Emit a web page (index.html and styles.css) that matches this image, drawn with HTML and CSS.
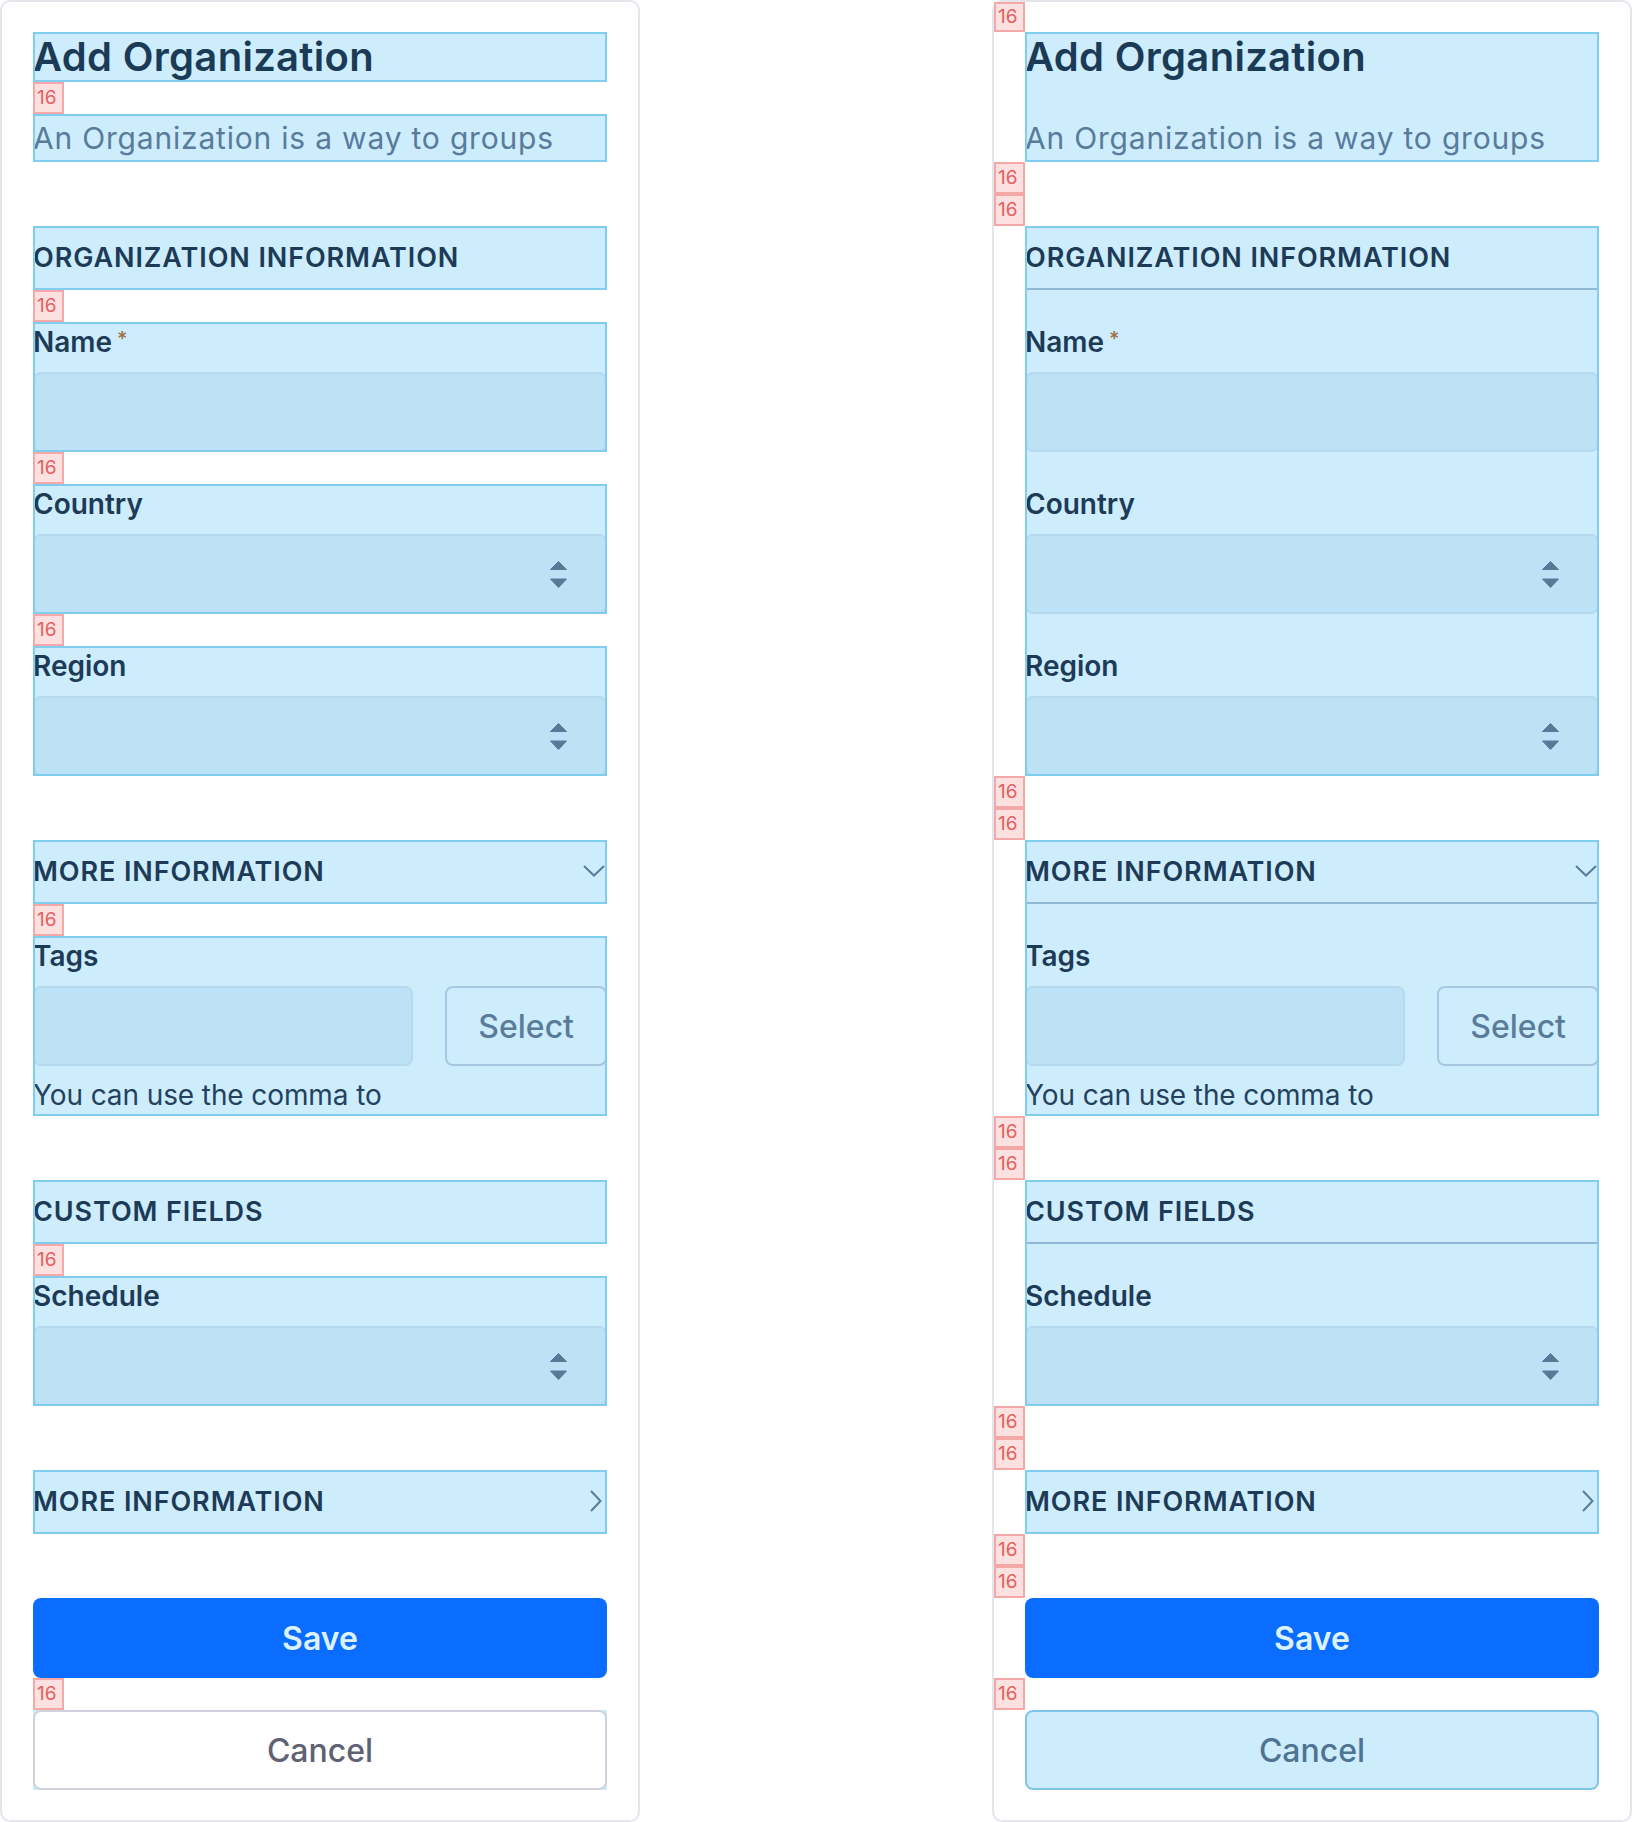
FILE: index.html
```html
<!DOCTYPE html>
<html lang="en">
<head>
<meta charset="utf-8">
<title>Add Organization</title>
<link rel="stylesheet" href="styles.css">
</head>
<body>
<div class="page">

  <!-- Left: element-level spacing -->
  <section class="card card-a">
    <div class="hl title-box"><h1 class="title">Add Organization</h1></div>
    <div class="sp"><span class="badge">16</span></div>
    <p class="hl desc">An Organization is a way to groups</p>
    <div class="sp2"></div>
    <div class="hl sec-head"><span>ORGANIZATION INFORMATION</span></div>
    <div class="sp"><span class="badge">16</span></div>
    <div class="hl field">
      <div class="label">Name<span class="req">*</span></div>
      <div class="input"></div>
    </div>
    <div class="sp"><span class="badge">16</span></div>
    <div class="hl field">
      <div class="label">Country</div>
      <div class="input select"><svg class="updown" width="17" height="27" viewBox="0 0 17 27"><path d="M8.5 0.5 L16.5 8.5 L0.5 8.5 Z M0.5 18 L16.5 18 L8.5 26.5 Z" fill="#587a99" stroke="#587a99" stroke-width="1" stroke-linejoin="round"/></svg></div>
    </div>
    <div class="sp"><span class="badge">16</span></div>
    <div class="hl field">
      <div class="label">Region</div>
      <div class="input select"><svg class="updown" width="17" height="27" viewBox="0 0 17 27"><path d="M8.5 0.5 L16.5 8.5 L0.5 8.5 Z M0.5 18 L16.5 18 L8.5 26.5 Z" fill="#587a99" stroke="#587a99" stroke-width="1" stroke-linejoin="round"/></svg></div>
    </div>
    <div class="sp2"></div>
    <div class="hl sec-head"><span>MORE INFORMATION</span><svg class="chev-down" width="22" height="12" viewBox="0 0 22 12"><path d="M1 1 L11 10.5 L21 1" fill="none" stroke="#5a7b9a" stroke-width="2"/></svg></div>
    <div class="sp"><span class="badge">16</span></div>
    <div class="hl field tags">
      <div class="label">Tags</div>
      <div class="tag-row"><div class="input"></div><div class="btn-select">Select</div></div>
      <div class="hint">You can use the comma to</div>
    </div>
    <div class="sp2"></div>
    <div class="hl sec-head"><span>CUSTOM FIELDS</span></div>
    <div class="sp"><span class="badge">16</span></div>
    <div class="hl field">
      <div class="label">Schedule</div>
      <div class="input select"><svg class="updown" width="17" height="27" viewBox="0 0 17 27"><path d="M8.5 0.5 L16.5 8.5 L0.5 8.5 Z M0.5 18 L16.5 18 L8.5 26.5 Z" fill="#587a99" stroke="#587a99" stroke-width="1" stroke-linejoin="round"/></svg></div>
    </div>
    <div class="sp2"></div>
    <div class="hl sec-head collapsed"><span>MORE INFORMATION</span><svg class="chev-right" width="12" height="22" viewBox="0 0 12 22"><path d="M1 1 L10.5 11 L1 21" fill="none" stroke="#5a7b9a" stroke-width="2"/></svg></div>
    <div class="sp2"></div>
    <div class="btn-save">Save</div>
    <div class="sp"><span class="badge">16</span></div>
    <div class="cancel-wrap"><div class="btn-cancel">Cancel</div></div>
  </section>

  <!-- Right: group-level spacing -->
  <section class="card card-b">
    <div class="lane lane-top"><span class="badge">16</span></div>
    <div class="lane"><span></span>
      <div class="hl group">
        <h1 class="title">Add Organization</h1>
        <div class="gap"></div>
        <p class="desc">An Organization is a way to groups</p>
      </div>
    </div>
    <div class="lane sp"><span class="badge">16</span></div>
    <div class="lane sp"><span class="badge">16</span></div>
    <div class="lane"><span></span>
      <div class="hl group">
        <div class="sec-head"><span>ORGANIZATION INFORMATION</span></div>
        <div class="gap"></div>
        <div class="field">
          <div class="label">Name<span class="req">*</span></div>
          <div class="input"></div>
        </div>
        <div class="gap"></div>
        <div class="field">
          <div class="label">Country</div>
          <div class="input select"><svg class="updown" width="17" height="27" viewBox="0 0 17 27"><path d="M8.5 0.5 L16.5 8.5 L0.5 8.5 Z M0.5 18 L16.5 18 L8.5 26.5 Z" fill="#587a99" stroke="#587a99" stroke-width="1" stroke-linejoin="round"/></svg></div>
        </div>
        <div class="gap"></div>
        <div class="field">
          <div class="label">Region</div>
          <div class="input select"><svg class="updown" width="17" height="27" viewBox="0 0 17 27"><path d="M8.5 0.5 L16.5 8.5 L0.5 8.5 Z M0.5 18 L16.5 18 L8.5 26.5 Z" fill="#587a99" stroke="#587a99" stroke-width="1" stroke-linejoin="round"/></svg></div>
        </div>
      </div>
    </div>
    <div class="lane sp"><span class="badge">16</span></div>
    <div class="lane sp"><span class="badge">16</span></div>
    <div class="lane"><span></span>
      <div class="hl group">
        <div class="sec-head"><span>MORE INFORMATION</span><svg class="chev-down" width="22" height="12" viewBox="0 0 22 12"><path d="M1 1 L11 10.5 L21 1" fill="none" stroke="#5a7b9a" stroke-width="2"/></svg></div>
        <div class="gap"></div>
        <div class="field tags">
          <div class="label">Tags</div>
          <div class="tag-row"><div class="input"></div><div class="btn-select">Select</div></div>
          <div class="hint">You can use the comma to</div>
        </div>
      </div>
    </div>
    <div class="lane sp"><span class="badge">16</span></div>
    <div class="lane sp"><span class="badge">16</span></div>
    <div class="lane"><span></span>
      <div class="hl group">
        <div class="sec-head"><span>CUSTOM FIELDS</span></div>
        <div class="gap"></div>
        <div class="field">
          <div class="label">Schedule</div>
          <div class="input select"><svg class="updown" width="17" height="27" viewBox="0 0 17 27"><path d="M8.5 0.5 L16.5 8.5 L0.5 8.5 Z M0.5 18 L16.5 18 L8.5 26.5 Z" fill="#587a99" stroke="#587a99" stroke-width="1" stroke-linejoin="round"/></svg></div>
        </div>
      </div>
    </div>
    <div class="lane sp"><span class="badge">16</span></div>
    <div class="lane sp"><span class="badge">16</span></div>
    <div class="lane"><span></span>
      <div class="hl sec-head collapsed"><span>MORE INFORMATION</span><svg class="chev-right" width="12" height="22" viewBox="0 0 12 22"><path d="M1 1 L10.5 11 L1 21" fill="none" stroke="#5a7b9a" stroke-width="2"/></svg></div>
    </div>
    <div class="lane sp"><span class="badge">16</span></div>
    <div class="lane sp"><span class="badge">16</span></div>
    <div class="lane"><span></span><div class="btn-save">Save</div></div>
    <div class="lane sp"><span class="badge">16</span></div>
    <div class="lane"><span></span><div class="btn-cancel tinted">Cancel</div></div>
  </section>

</div>
</body>
</html>
```

FILE: styles.css
```css
* {
  box-sizing: border-box;
  margin: 0;
  padding: 0;
}

html, body {
  background: #ffffff;
}

body {
  font-family: Inter, "Noto Sans", sans-serif;
  color: #1d3a56;
}

.page {
  display: flex;
  justify-content: space-between;
  width: 1632px;
  height: 1822px;
}

.card {
  width: 640px;
  height: 1822px;
  background: #ffffff;
  border: 2px solid #e4e6ec;
  border-radius: 10px;
  display: flex;
  flex-direction: column;
}

.card-a {
  padding: 30px 31px;
}

.card-b {
  padding: 0 31px 30px 0;
}

/* highlight overlay (spec boxes) */
.hl {
  background: #cdedfd;
  outline: 2px solid #80cdf0;
  outline-offset: -2px;
}

/* spacing markers */
.sp {
  height: 32px;
  display: flex;
}

.sp2 {
  height: 64px;
}

.gap {
  height: 32px;
}

.badge {
  width: 31px;
  height: 32px;
  background: #fde1e1;
  border: 2px solid #f4a8a8;
  color: #e2605f;
  font-size: 19px;
  line-height: 28px;
  padding-left: 2px;
  font-family: Inter, sans-serif;
}

/* right card lanes */
.lane {
  display: grid;
  grid-template-columns: 31px 574px;
}

.lane.sp {
  height: 32px;
}

.lane-top {
  height: 30px;
}

.lane-top .badge {
  height: 30px;
  line-height: 26px;
}

/* typography */
.title {
  font-size: 40px;
  line-height: 50px;
  font-weight: 600;
  color: #1b3a56;
  letter-spacing: 0.3px;
}

.desc {
  font-size: 30px;
  line-height: 48px;
  font-weight: 400;
  color: #597b9b;
  letter-spacing: 0.8px;
}

.sec-head {
  height: 64px;
  border-bottom: 2px solid #8fb8d6;
  display: flex;
  align-items: center;
  justify-content: space-between;
  font-size: 27px;
  font-weight: 600;
  letter-spacing: 0.9px;
  color: #1d3b57;
}

.chev-down {
  margin-right: 2px;
}

.chev-right {
  margin-right: 5px;
}

.field {
  display: flex;
  flex-direction: column;
}

.label {
  font-size: 28px;
  line-height: 40px;
  font-weight: 600;
  color: #1d3b57;
  margin-bottom: 10px;
}

.req {
  font-size: 20px;
  vertical-align: top;
  line-height: 34px;
  margin-left: 5px;
  color: #9c7044;
  font-weight: 500;
}

.input {
  height: 80px;
  background: #bee2f5;
  border: 2px solid #b5d9ee;
  border-radius: 8px;
}

.select {
  display: flex;
  align-items: center;
  justify-content: flex-end;
  padding-right: 38px;
}

.tag-row {
  display: flex;
  gap: 32px;
}

.tag-row .input {
  flex: 1;
}

.btn-select {
  height: 80px;
  padding: 0 31px;
  border: 2px solid #a5c7df;
  border-radius: 8px;
  display: flex;
  align-items: center;
  font-size: 32px;
  font-weight: 500;
  color: #5a7c9b;
}

.hint {
  margin-top: 8px;
  font-size: 28px;
  line-height: 42px;
  color: #24425e;
  letter-spacing: -0.1px;
}

.btn-save {
  height: 80px;
  background: #0b6dff;
  border-radius: 8px;
  display: flex;
  align-items: center;
  justify-content: center;
  font-size: 32px;
  font-weight: 600;
  color: #dcf3ff;
}

.cancel-wrap {
  background: #cdedfd;
}

.btn-cancel {
  height: 80px;
  background: #ffffff;
  border: 2px solid #cfd2db;
  border-radius: 8px;
  display: flex;
  align-items: center;
  justify-content: center;
  font-size: 32px;
  font-weight: 500;
  color: #5e6272;
}

.btn-cancel.tinted {
  background: #cdedfd;
  border-color: #7fc5ea;
  color: #4f7391;
}
```
